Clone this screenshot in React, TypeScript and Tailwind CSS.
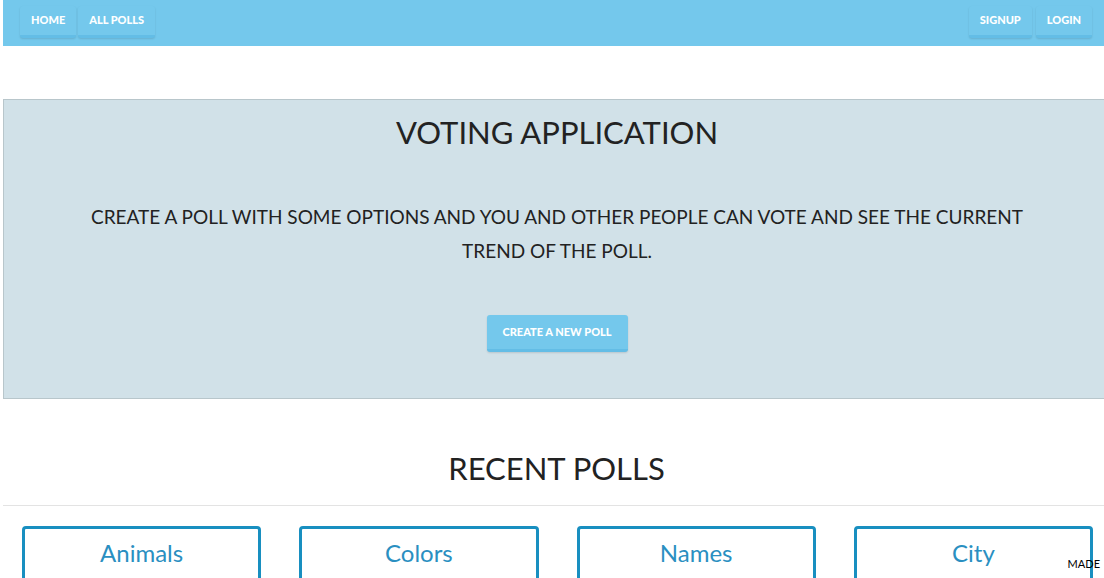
import React from 'react';

const polls = ['Animals', 'Colors', 'Names', 'City'];

const NavButton: React.FC<{ label: string }> = ({ label }) => (
    <button className="h-[32px] px-[11px] rounded-[3px] bg-[#74c8ec] border-b-[3px] border-[#63bde6] shadow-[0_1px_2px_rgba(0,0,0,0.12)] text-[11px] font-black text-white">
        {label}
    </button>
);

export default function App() {
    return (
        <div className="relative h-[578px] overflow-hidden bg-white pl-[3px] text-[#222] font-['Lato','Liberation_Sans',sans-serif]">
            {/* Navbar */}
            <nav className="h-[46px] bg-[#74c8ec] flex items-start justify-between pt-[6px] pl-[17px] pr-[12px]">
                <div className="flex gap-[2px]">
                    <NavButton label="HOME" />
                    <NavButton label="ALL POLLS" />
                </div>
                <div className="flex gap-[4px]">
                    <NavButton label="SIGNUP" />
                    <NavButton label="LOGIN" />
                </div>
            </nav>

            {/* Jumbotron */}
            <section className="mt-[53px] h-[300px] bg-[#d1e1e8] border border-r-0 border-[#b8c6cb] pl-[6px] flex flex-col items-center">
                <h1 className="mt-[12px] text-[31px] leading-[40px] text-[#222]">VOTING APPLICATION</h1>
                <p className="mt-[48px] w-[960px] text-center text-[19px] leading-[34px] text-[#222]">
                    CREATE A POLL WITH SOME OPTIONS AND YOU AND OTHER PEOPLE CAN VOTE AND SEE THE CURRENT TREND OF THE POLL.
                </p>
                <button className="mt-[47px] h-[37px] w-[141px] rounded-[3px] bg-[#74c8ec] border-b-[3px] border-[#63bde6] shadow-[0_1px_2px_rgba(0,0,0,0.12)] text-[11px] font-black text-white">
                    CREATE A NEW POLL
                </button>
            </section>

            {/* Recent polls */}
            <h2 className="mt-[49px] pl-[6px] text-center text-[31px] leading-[40px] text-[#222]">RECENT POLLS</h2>
            <hr className="mt-[17px] border-t border-[#e3e3e3]" />
            <div className="mt-[20px] grid grid-cols-4 gap-x-[38px] pl-[19px] pr-[11px]">
                {polls.map((p) => (
                    <div key={p} className="h-[80px] rounded-[4px] border-[3px] border-[#188fc0] text-center pt-[6px]">
                        <span className="text-[24px] text-[#2a8fc1]">{p}</span>
                    </div>
                ))}
            </div>

            <div className="absolute right-[4px] bottom-[6px] text-[11px] text-black">MADE</div>
        </div>
    );
}
